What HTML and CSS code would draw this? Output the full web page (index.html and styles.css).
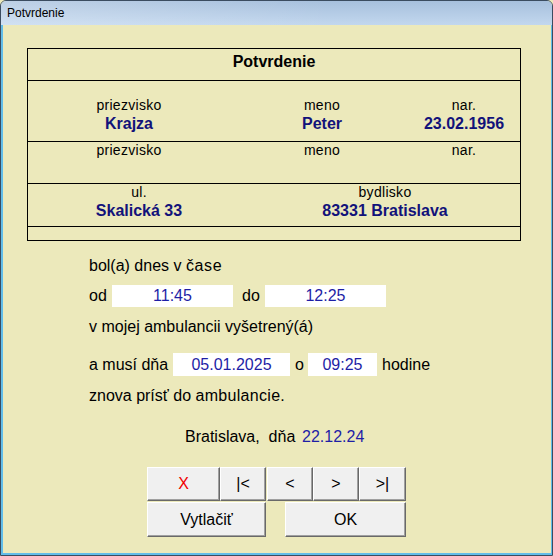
FILE: index.html
```html
<!DOCTYPE html>
<html lang="sk">
<head>
<meta charset="utf-8">
<title>Potvrdenie</title>
<link rel="stylesheet" href="styles.css">
</head>
<body>
<div class="window">
  <div class="titlebar">Potvrdenie</div>
  <div class="client">
    <div class="card">
      <div class="card-title">Potvrdenie</div>
      <div class="row row-person">
        <div class="cell"><div class="lbl">priezvisko</div><div class="val">Krajza</div></div>
        <div class="cell"><div class="lbl">meno</div><div class="val">Peter</div></div>
        <div class="cell"><div class="lbl">nar.</div><div class="val">23.02.1956</div></div>
      </div>
      <div class="row row-person2">
        <div class="cell"><div class="lbl">priezvisko</div></div>
        <div class="cell"><div class="lbl">meno</div></div>
        <div class="cell"><div class="lbl">nar.</div></div>
      </div>
      <div class="row row-address">
        <div class="cell"><div class="lbl">ul.</div><div class="val">Skalická 33</div></div>
        <div class="cell"><div class="lbl">bydlisko</div><div class="val">83331 Bratislava</div></div>
      </div>
      <div class="row-empty"></div>
    </div>

    <div class="form">
      <div class="line line-a">bol(a) dnes v <span class="spaced">čase</span></div>
      <div class="line line-b">
        <span class="t-od">od</span>
        <div class="field f-time">11:45</div>
        <span class="t-do">do</span>
        <div class="field f-time">12:25</div>
      </div>
      <div class="line line-c">v mojej ambulancii vyšetrený(á)</div>
      <div class="line line-d">
        <span class="t-musi">a musí dňa</span>
        <div class="field f-date">05.01.2025</div>
        <span class="t-o">o</span>
        <div class="field f-hour">09:25</div>
        <span class="t-hod">hodine</span>
      </div>
      <div class="line line-e">znova prísť do <span class="spaced2">ambulancie.</span></div>
    </div>

    <div class="place"><span class="place-lbl">Bratislava,  dňa</span><span class="place-val">22.12.24</span></div>

    <div class="buttons">
      <div class="btn-row btn-row1">
        <div class="btn b-x">X</div>
        <div class="btn b-nav">|&lt;</div>
        <div class="btn b-nav b-gap">&lt;</div>
        <div class="btn b-nav">&gt;</div>
        <div class="btn b-nav b-last">&gt;|</div>
      </div>
      <div class="btn-row btn-row2">
        <div class="btn b-print">Vytlačiť</div>
        <div class="btn b-ok">OK</div>
      </div>
    </div>
  </div>
</div>
</body>
</html>
```

FILE: styles.css
```css
html, body {
  margin: 0;
  padding: 0;
  background: #ece9bb;
}

.window {
  width: 553px;
  height: 556px;
  box-sizing: border-box;
  border: 1px solid #3b4c60;
  border-radius: 6px 6px 0 0;
  display: flex;
  flex-direction: column;
  overflow: hidden;
  font-family: "Liberation Sans", Arial, sans-serif;
  color: #000;
}

.titlebar {
  height: 24px;
  flex: none;
  box-sizing: border-box;
  padding-left: 6px;
  line-height: 25px;
  font-size: 12px;
  color: #000;
  background: linear-gradient(to right, rgba(255,255,255,0.25), rgba(255,255,255,0) 60%),
              linear-gradient(to bottom, #a7c0dd, #c2d7ee);
}

.client {
  flex: 1;
  background: #ece9bb;
  border-left: 2px solid #62bde9;
  border-right: 1px solid #62bde9;
  border-bottom: 2px solid #62bde9;
  display: flex;
  flex-direction: column;
}

/* ---------- card ---------- */
.card {
  margin: 23px 0 0 24px;
  width: 494px;
  box-sizing: border-box;
  border: 1px solid #000;
}

.card-title {
  height: 32px;
  box-sizing: border-box;
  border-bottom: 1px solid #000;
  padding-top: 3px;
  line-height: 20px;
  font-size: 16px;
  font-weight: bold;
  text-align: center;
}

.row {
  display: grid;
  box-sizing: border-box;
  border-bottom: 1px solid #000;
  text-align: center;
}

.row-person {
  height: 61px;
  padding-top: 16px;
  grid-template-columns: 202px 184px 100px;
}

.row-person2 {
  height: 42px;
  grid-template-columns: 202px 184px 100px;
}

.row-address {
  height: 43px;
  grid-template-columns: 222px 270px;
}

.row-empty {
  height: 13px;
}

.lbl {
  font-size: 14px;
  line-height: 16px;
  letter-spacing: 0.3px;
}

.val {
  margin-top: 2px;
  font-size: 16px;
  line-height: 18px;
  font-weight: bold;
  color: #12127a;
}

/* ---------- form ---------- */
.form {
  margin-left: 86px;
  font-size: 16px;
  display: flex;
  flex-direction: column;
}

.line {
  line-height: 20px;
  white-space: nowrap;
}

.spaced { letter-spacing: 0.6px; }
.spaced2 { letter-spacing: 0.3px; }

.line-a { margin-top: 15px; }
.line-b { margin-top: 9px; display: flex; align-items: center; height: 22px; }
.line-c { margin-top: 10px; }
.line-d { margin-top: 16px; display: flex; align-items: center; height: 23px; }
.line-e { margin-top: 10px; }

.field {
  background: #fff;
  color: #1e1ea6;
  text-align: center;
  box-sizing: border-box;
  align-self: stretch;
  line-height: 22px;
}

.f-time { width: 121px; }
.f-date { width: 117px; line-height: 23px; }
.f-hour { width: 69px; line-height: 23px; }

.t-od { width: 23px; }
.t-do { width: 32px; box-sizing: border-box; padding-left: 9px; }
.t-musi { width: 84px; }
.t-o { width: 18px; box-sizing: border-box; padding-left: 5px; }
.t-hod { margin-left: 5px; }

/* ---------- place ---------- */
.place {
  margin: 21px 0 0 182px;
  font-size: 16px;
  line-height: 20px;
  display: flex;
}

.place-lbl {
  width: 117px;
  white-space: pre;
}

.place-val {
  color: #1e1ea6;
}

/* ---------- buttons ---------- */
.buttons {
  margin: 20px 0 0 144px;
  display: flex;
  flex-direction: column;
  gap: 1px;
}

.btn-row {
  display: flex;
}

.btn-row1 { height: 34px; }
.btn-row2 { height: 35px; }

.btn {
  box-sizing: border-box;
  background: #f0f0f0;
  border-top: 1px solid #ffffff;
  border-left: 1px solid #ffffff;
  border-right: 1px solid #696969;
  border-bottom: 1px solid #696969;
  box-shadow: inset -1px -1px 0 #a0a0a0;
  display: flex;
  align-items: center;
  justify-content: center;
  font-size: 16px;
}

.b-x { width: 73px; color: #f00000; }
.b-nav { width: 46px; }
.b-gap { margin-left: 1px; }
.b-last { width: 47px; }
.b-print { width: 119px; }
.b-ok { width: 121px; margin-left: 19px; }
```
